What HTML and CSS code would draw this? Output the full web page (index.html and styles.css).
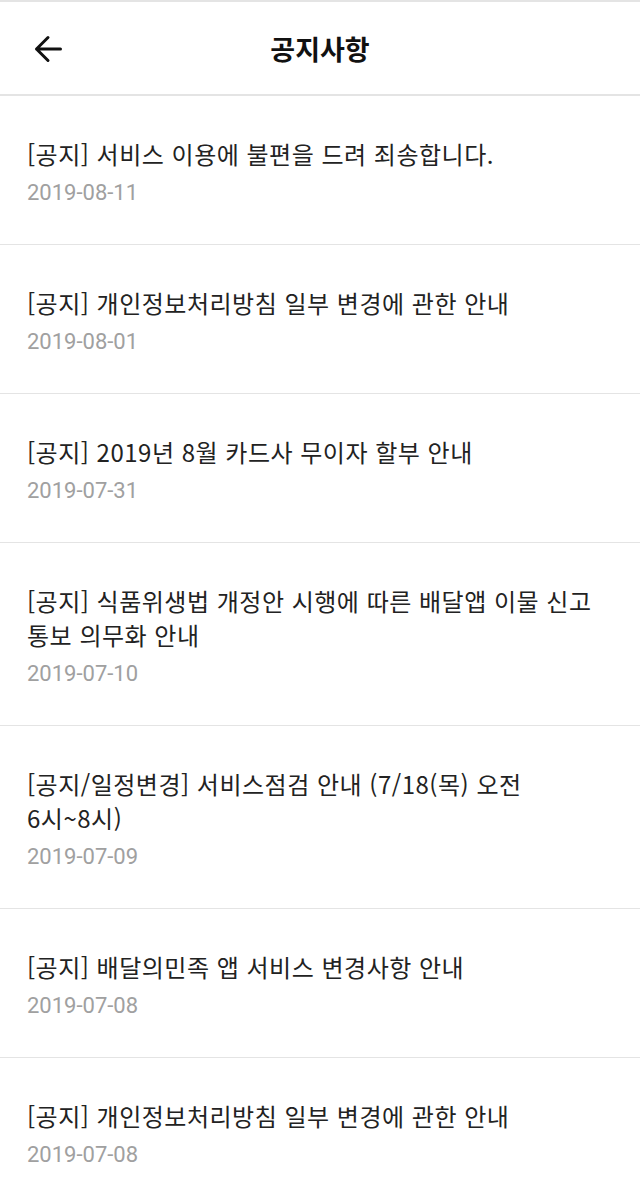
FILE: index.html
```html
<!DOCTYPE html>
<html lang="ko">
<head>
<meta charset="utf-8">
<link rel="stylesheet" href="styles.css">
</head>
<body>
<div class="app">
  <header class="header">
    <button class="back" aria-label="뒤로">
      <svg width="28" height="28" viewBox="0 0 28 28"><path d="M26.5 14H2.5M14 2.5L2.5 14 14 25.5" fill="none" stroke="#111" stroke-width="3" stroke-linecap="round" stroke-linejoin="round"/></svg>
    </button>
    <h1 class="title">공지사항</h1>
  </header>
  <ul class="list">
    <li class="item"><p class="item-title">[공지] 서비스 이용에 불편을 드려 죄송합니다.</p><p class="item-date">2019-08-11</p></li>
    <li class="item"><p class="item-title">[공지] 개인정보처리방침 일부 변경에 관한 안내</p><p class="item-date">2019-08-01</p></li>
    <li class="item"><p class="item-title">[공지] 2019년 8월 카드사 무이자 할부 안내</p><p class="item-date">2019-07-31</p></li>
    <li class="item"><p class="item-title">[공지] 식품위생법 개정안 시행에 따른 배달앱 이물 신고 통보 의무화 안내</p><p class="item-date">2019-07-10</p></li>
    <li class="item"><p class="item-title">[공지/일정변경] 서비스점검 안내 (7/18(목) 오전 <span class="nowrap">6시~8시)</span></p><p class="item-date">2019-07-09</p></li>
    <li class="item"><p class="item-title">[공지] 배달의민족 앱 서비스 변경사항 안내</p><p class="item-date">2019-07-08</p></li>
    <li class="item"><p class="item-title">[공지] 개인정보처리방침 일부 변경에 관한 안내</p><p class="item-date">2019-07-08</p></li>
  </ul>
</div>
</body>
</html>
```
FILE: styles.css
```css
* { box-sizing: border-box; }
html, body { margin: 0; padding: 0; background: #fff; }
body { font-family: "Noto Sans CJK KR", "Noto Sans", sans-serif; color: #222; }
.app { border-top: 2px solid #e4e4e4; }
.header {
  position: relative;
  height: 94px;
  display: flex;
  align-items: center;
  justify-content: center;
  border-bottom: 2px solid #e4e4e4;
}
.back {
  position: absolute;
  left: 34px;
  top: 33px;
  padding: 0;
  border: 0;
  background: none;
  width: 28px;
  height: 28px;
}
.back svg { display: block; }
.title {
  margin: 0;
  font-size: 27px;
  font-weight: 700;
  color: #111;
  line-height: 1;
}
.list { list-style: none; margin: 0; padding: 0; }
.item {
  padding: 41px 27px 33px;
  border-bottom: 1px solid #e4e4e4;
}
.item-title {
  margin: 0;
  font-size: 24px;
  letter-spacing: 0.5px;
  line-height: 34px;
  color: #222;
  word-break: keep-all;
}
.nowrap { white-space: nowrap; }
.item-date {
  margin: 4px 0 0;
  font-family: Roboto, "Noto Sans", sans-serif;
  font-size: 22px;
  line-height: 36px;
  color: #a0a0a0;
}
```
